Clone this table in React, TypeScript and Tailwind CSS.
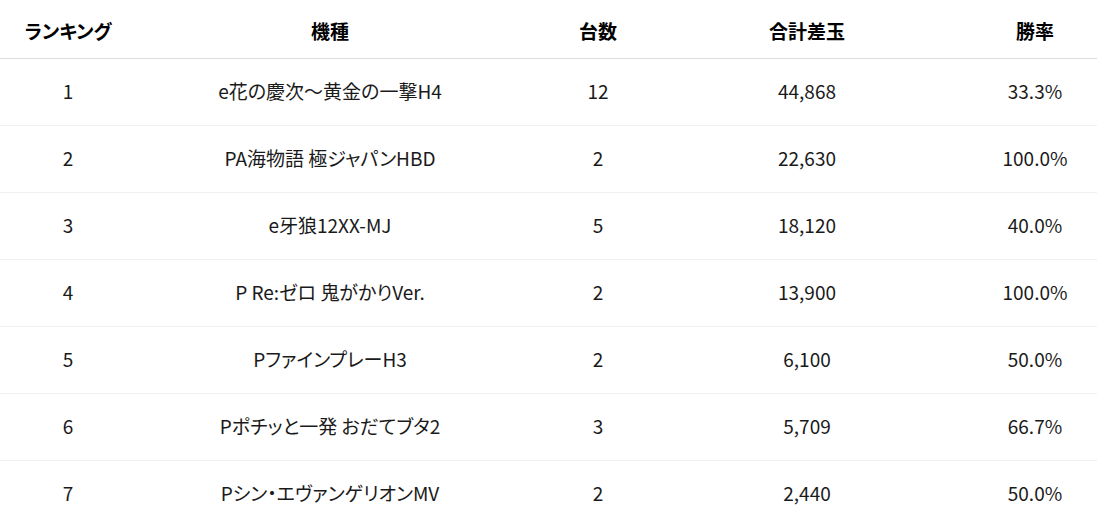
import React from 'react';

type Row = {
  rank: number;
  name: string;
  count: number;
  total: string;
  rate: string;
};

const rows: Row[] = [
  { rank: 1, name: 'e花の慶次〜黄金の一撃H4', count: 12, total: '44,868', rate: '33.3%' },
  { rank: 2, name: 'PA海物語 極ジャパンHBD', count: 2, total: '22,630', rate: '100.0%' },
  { rank: 3, name: 'e牙狼12XX-MJ', count: 5, total: '18,120', rate: '40.0%' },
  { rank: 4, name: 'P Re:ゼロ 鬼がかりVer.', count: 2, total: '13,900', rate: '100.0%' },
  { rank: 5, name: 'PファインプレーH3', count: 2, total: '6,100', rate: '50.0%' },
  { rank: 6, name: 'Pポチッと一発 おだてブタ2', count: 3, total: '5,709', rate: '66.7%' },
  { rank: 7, name: 'Pシン・エヴァンゲリオンMV', count: 2, total: '2,440', rate: '50.0%' },
];

const App: React.FC = () => {
  return (
    <div
      className="w-[1097px] h-[525px] overflow-hidden bg-white text-[#1a1a1a] [font-feature-settings:'palt']"
      style={{ fontFamily: '"Noto Sans CJK JP", "Noto Sans", sans-serif' }}
    >
      <table className="w-[1128px] table-fixed border-collapse text-[19px]">
        <colgroup>
          <col className="w-[136px]" />
          <col className="w-[388px]" />
          <col className="w-[148px]" />
          <col className="w-[270px]" />
          <col className="w-[186px]" />
        </colgroup>
        <thead>
          <tr className="border-b border-[#dcdcdc]">
            <th className="pt-[14px] pb-[10px] h-[58px] font-bold text-black">ランキング</th>
            <th className="pt-[14px] pb-[10px] font-bold text-black">機種</th>
            <th className="pt-[14px] pb-[10px] font-bold text-black">台数</th>
            <th className="pt-[14px] pb-[10px] font-bold text-black">合計差玉</th>
            <th className="pt-[14px] pb-[10px] font-bold text-black">勝率</th>
          </tr>
        </thead>
        <tbody>
          {rows.map((r) => (
            <tr key={r.rank} className="border-b border-[#f0f0f0] h-[67px]">
              <td className="text-center">{r.rank}</td>
              <td className="text-center">{r.name}</td>
              <td className="text-center">{r.count}</td>
              <td className="text-center">{r.total}</td>
              <td className="text-center">{r.rate}</td>
            </tr>
          ))}
        </tbody>
      </table>
    </div>
  );
};

export default App;
